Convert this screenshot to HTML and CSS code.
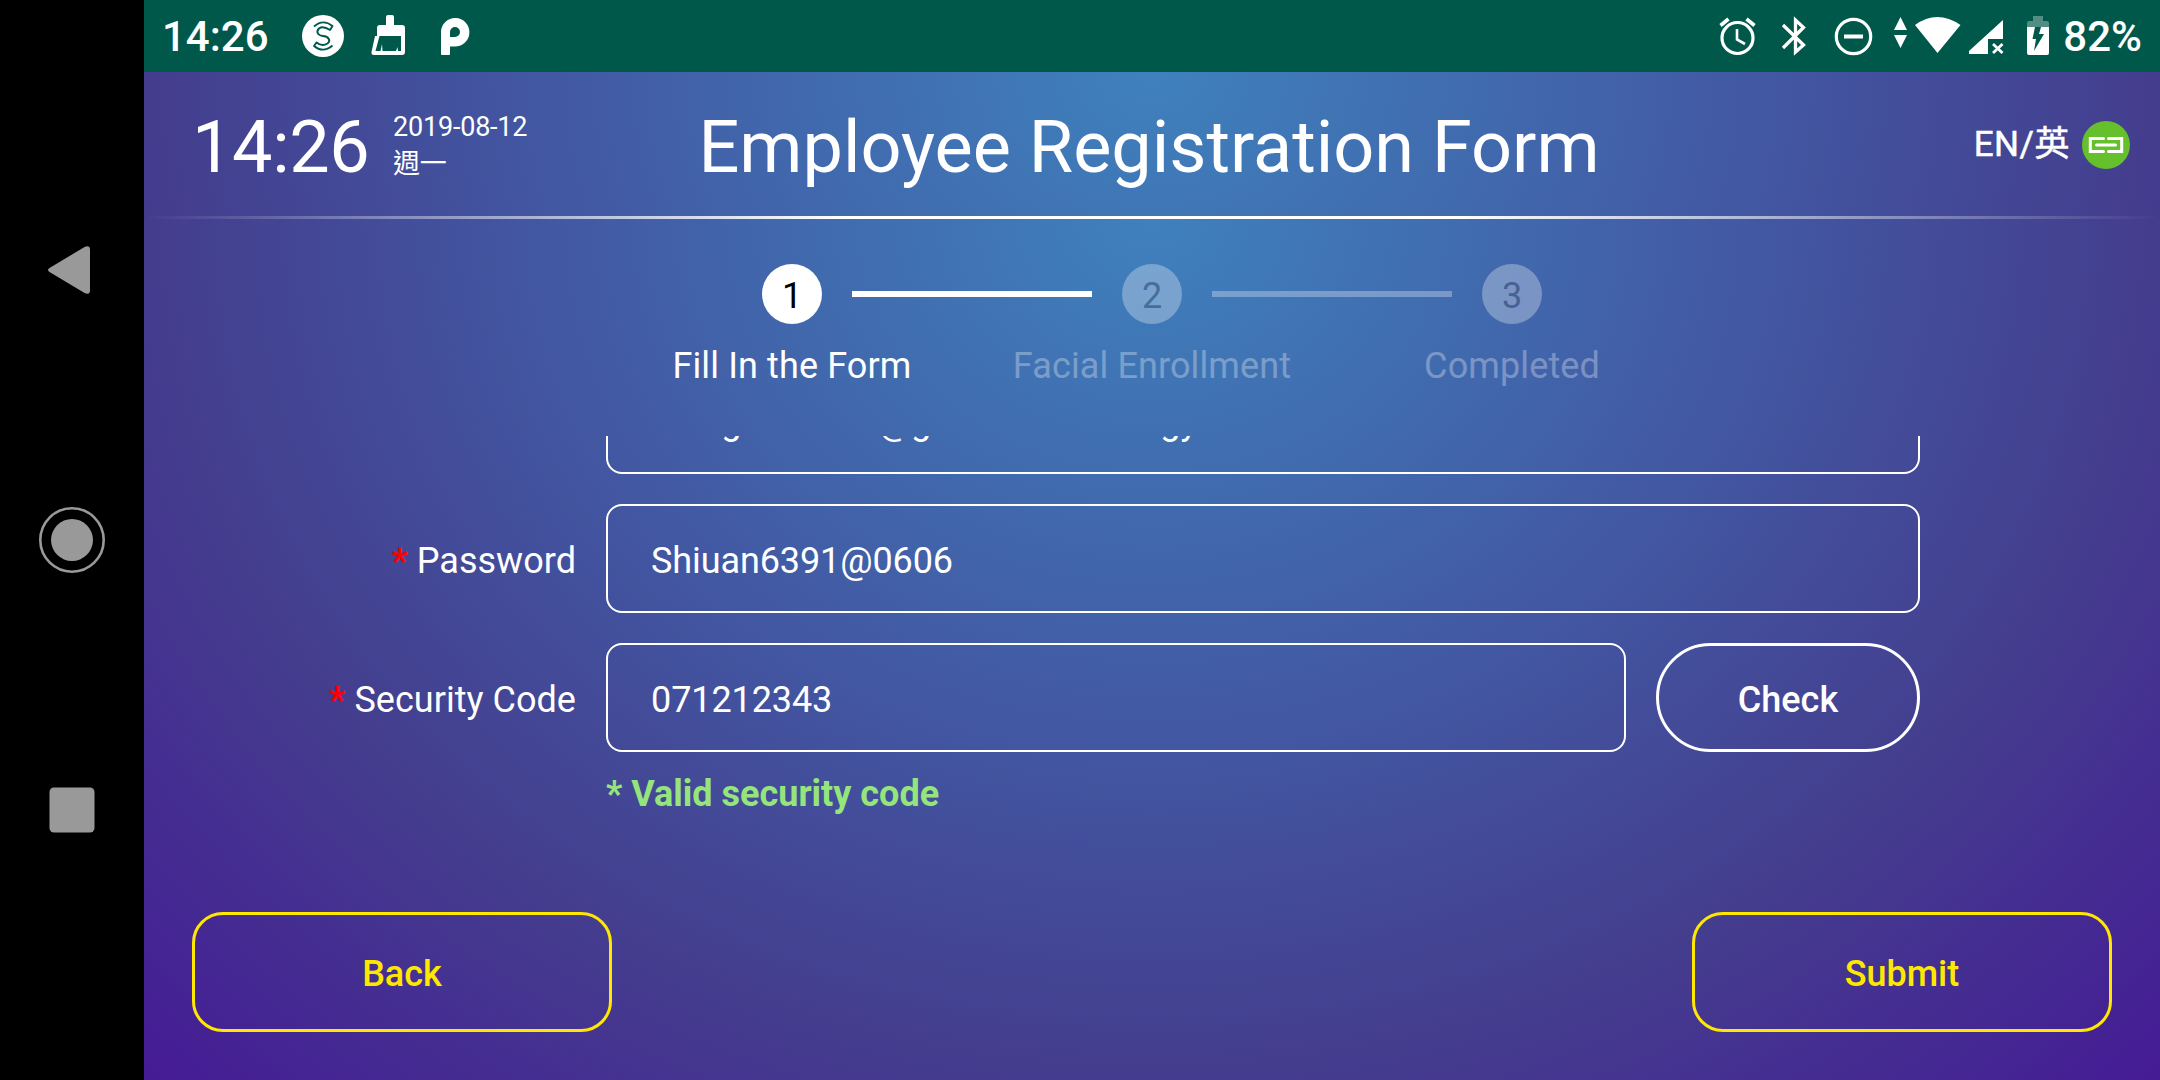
FILE: index.html
```html
<!DOCTYPE html>
<html lang="en">
<head>
<meta charset="utf-8">
<title>Employee Registration Form</title>
<link rel="stylesheet" href="styles.css">
</head>
<body>
<nav class="navbar">
  <svg class="nav-icon" viewBox="0 0 72 72"><path d="M13.500 34 49 12.700Q54 11 54 15.500V56.500Q54 61 49 59.300L13.500 38Q10.500 36 13.500 34Z"/></svg>
  <svg class="nav-icon" viewBox="0 0 72 72"><circle cx="36" cy="36" r="21"/><circle cx="36" cy="36" r="31.700" fill="none" stroke="#999" stroke-width="2.600"/></svg>
  <svg class="nav-icon" viewBox="0 0 72 72"><rect x="13.500" y="13.500" width="45" height="45" rx="4.500"/></svg>
</nav>
<div class="screen">
  <div class="statusbar">
    <span class="status-text">14:26</span>
    <svg class="status-left" viewBox="290 0 200 72" fill="#fff">
      <circle cx="323" cy="36" r="21"/>
      <g fill="none" stroke="#00584b" stroke-width="1.900" stroke-linejoin="round">
        <path d="M314 26.500Q323 18.500 332.500 26L330 30Q323 25.500 319 28.500C315.500 32 318 35.500 323 36C329 36.500 331 41 327.500 43.500Q322 47 316.500 42.500L314 46Q323 53.500 332.500 45.500"/>
      </g>
      <path d="M377 36V28Q377 25 380 25H386V17Q386 15 388 15H392Q394 15 394 17V25H402Q405 25 405 28V52Q405 55 402 55H374Q371 55 371.500 52L375 36Z"/>
      <path d="M379.500 36H401V51H398L397.500 47 396 51H382.500L382 44 380.500 51H375.500Z" fill="#00584b"/>
      <path fill-rule="evenodd" d="M441 54V31.500A14.200 14.200 0 1 1 455 46.500H450V54Q450 55 449 55H442Q441 55 441 54ZM450 37H455A5 5 0 1 0 450 32Z"/>
    </svg>
    <svg class="status-right" viewBox="1710 0 350 72" fill="#fff">
      <g fill="none" stroke="#fff" stroke-width="3.200"><circle cx="1737.500" cy="38" r="15.500"/><path d="M1737 29V39.500L1745 44" stroke-width="2.600"/><path d="M1720.500 25.500 1728.500 19M1746.500 19 1754.500 25.500" stroke-width="3.600"/></g>
      <path d="M1783 25 1803.500 45 1795.500 52V20L1803.500 27.500 1783 48" fill="none" stroke="#fff" stroke-width="3.300"/>
      <circle cx="1853.500" cy="36.500" r="17.200" fill="none" stroke="#fff" stroke-width="3.200"/><path d="M1844 34.500H1863V38.500H1844Z"/>
      <path d="M1900.500 17 1907 30H1894ZM1894 35H1907L1900.500 48Z"/>
      <path d="M1915 25Q1937 9 1960.500 25L1937.500 53Z"/>
      <path d="M2003 20V39H1988V54H1969V51Z"/><path d="M1993 44 2002.500 53M2002.500 44 1993 53" stroke="#fff" stroke-width="2.800"/>
      <path d="M2033 16H2043V21H2047Q2049 21 2049 23V27H2027V23Q2027 21 2029 21H2033Z" opacity=".32"/>
      <path d="M2027 27H2049V53Q2049 55 2047 55H2029Q2027 55 2027 53Z"/><path d="M2035 27H2041L2039 34H2044L2034 51 2036 39H2032.500Z" fill="#00584b"/>
    </svg>
    <span class="status-text">82%</span>
  </div>
  <header class="header">
    <div class="clock">14:26</div>
    <div class="date"><span>2019-08-12</span><span>週一</span></div>
    <h1 class="title">Employee Registration Form</h1>
    <div class="lang"><span>EN/英</span>
      <svg class="link-icon" viewBox="0 0 48 48"><circle cx="24" cy="24" r="24" fill="#65c02b"/><path d="M21.500 17.500H8.300V30.500H21.500M26.500 17.500H39.700V30.500H26.500M14.500 24H33.500" fill="none" stroke="#fff" stroke-width="3" stroke-linecap="round"/></svg>
    </div>
  </header>
  <div class="body">
    <div class="steps">
      <div class="step active"><div class="dot">1</div><div class="step-label">Fill In the Form</div></div>
      <div class="bar active"></div>
      <div class="step"><div class="dot">2</div><div class="step-label">Facial Enrollment</div></div>
      <div class="bar"></div>
      <div class="step"><div class="dot">3</div><div class="step-label">Completed</div></div>
    </div>
    <main class="form">
      <div class="row"><div class="label"></div><div class="input email">tsung.shiuano@gorilla-technology.com</div></div>
      <div class="row"><div class="label"><b>*</b> Password</div><div class="input">Shiuan6391@0606</div></div>
      <div class="row"><div class="label"><b>*</b> Security Code</div><div class="input">071212343</div><button class="check">Check</button></div>
      <div class="message">* Valid security code</div>
    </main>
    <footer class="footer"><button class="action">Back</button><button class="action">Submit</button></footer>
  </div>
</div>
</body>
</html>
```
FILE: styles.css
```css
* { box-sizing: border-box; }
body {
  margin: 0;
  width: 2160px;
  height: 1080px;
  display: flex;
  overflow: hidden;
  background: #000;
  color: #fff;
  font-family: Roboto, "Noto Sans CJK TC", sans-serif;
  font-size: 36px;
  line-height: 42px;
}
button { font: inherit; color: inherit; background: none; padding: 0; }
.navbar {
  width: 144px;
  display: flex;
  flex-direction: column;
  align-items: center;
  gap: 198px;
  padding-top: 234px;
}
.nav-icon { width: 72px; height: 72px; fill: #999; flex: none; }
.screen { width: 2016px; height: 1080px; display: flex; flex-direction: column; }
.header, .body {
  background: radial-gradient(1425px 1217px at 50% 0, #3f81bd 0, #425aa4 40%, #443d8e 70%, #451b95 100%);
}
.statusbar {
  height: 72px;
  flex: none;
  display: flex;
  align-items: center;
  background: #00584b;
  padding: 2px 18px 0 18px;
  font-size: 42px;
  font-weight: 500;
}
.status-left { width: 200px; height: 72px; margin: -2px auto 0 21px; }
.status-right { width: 350px; height: 72px; margin: -2px 3px 0 0; }
.header {
  height: 147px;
  flex: none;
  position: relative;
  display: grid;
  grid-template-columns: 201px 276px 1fr 501px;
  align-items: center;
  padding: 2px 30px 3px 48px;
}
.header::after {
  content: "";
  position: absolute;
  inset: auto 0 0;
  height: 3px;
  background: linear-gradient(90deg, transparent, #fff 35%, #fff 65%, transparent);
}
.clock { font-size: 72px; line-height: 84px; letter-spacing: -.4px; padding-top: 6px; }
.date { display: flex; flex-direction: column; font-size: 27px; line-height: 37px; letter-spacing: -.2px; padding-top: 2px; }
.title { margin: 0; font-size: 72px; line-height: 84px; font-weight: 400; text-align: center; white-space: nowrap; padding-top: 6px; }
.lang { display: flex; justify-content: flex-end; align-items: center; gap: 12px; font-size: 35px; letter-spacing: .5px; -webkit-text-stroke: .5px #fff; }
.link-icon { width: 48px; height: 48px; margin-top: -1px; }
.body { height: 861px; flex: none; }
.steps { height: 217px; display: flex; justify-content: center; padding-top: 45px; }
.step { width: 60px; display: flex; flex-direction: column; align-items: center; gap: 21px; opacity: .3; }
.step.active { opacity: 1; }
.dot { width: 60px; height: 60px; flex: none; border-radius: 50%; background: #fff; color: #555; text-align: center; line-height: 64px; }
.active .dot { color: #000; }
.step-label { white-space: nowrap; letter-spacing: .12px; }
.bar { width: 240px; height: 6px; margin: 27px 30px 0; background: #fff; opacity: .3; }
.bar.active { opacity: 1; }
.form {
  height: 430px;
  overflow: hidden;
  display: flex;
  flex-direction: column;
  justify-content: flex-end;
  padding: 0 240px 51px 0;
}
.row { display: flex; gap: 30px; height: 109px; margin-bottom: 30px; flex: none; line-height: 115px; }
.label { width: 432px; text-align: right; letter-spacing: .03px; }
.label b { color: #f00; }
.input { flex: 1; border: 2px solid #fff; border-radius: 16px; padding-left: 43px; line-height: 111px; letter-spacing: -.1px; }
.email { letter-spacing: .07px; }
.check { width: 264px; border: 3px solid #fff; border-radius: 55px; font-weight: 500; line-height: 42px; padding-top: 5px; }
.message { color: #96e57c; font-weight: 700; line-height: 42px; margin: -9px 0 0 462px; }
.footer { display: flex; justify-content: space-between; padding: 46px 48px 0; }
.action { width: 420px; height: 120px; border: 3px solid #ffe800; border-radius: 31px; color: #ffe800; font-weight: 500; padding-top: 3px; }
```
